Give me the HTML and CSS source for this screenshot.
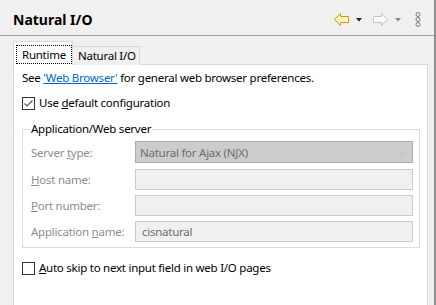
FILE: index.html
```html
<!DOCTYPE html>
<html>
<head>
<meta charset="utf-8">
<link rel="stylesheet" href="styles.css">
</head>
<body>
<div class="window">
  <div class="header">
    <div class="title">Natural I/O</div>
    <div class="toolbar">
      <svg class="ico-arrow" width="15" height="13" viewBox="0 0 15 13"><path d="M0.5 6.5 L6.5 0.5 L6.5 3.5 L14.5 3.5 L14.5 9.5 L6.5 9.5 L6.5 12.5 Z" fill="#fff3c4" stroke="#d8960f" stroke-linejoin="miter"/></svg>
      <svg class="ico-drop" width="6" height="4" viewBox="0 0 6 4"><path d="M0 0 H6 L3 3.5 Z" fill="#222"/></svg>
      <svg class="ico-arrow fwd" width="15" height="13" viewBox="0 0 15 13"><path d="M14.5 6.5 L8.5 0.5 L8.5 3.5 L0.5 3.5 L0.5 9.5 L8.5 9.5 L8.5 12.5 Z" fill="#fafafa" stroke="#c4c4c4"/></svg>
      <svg class="ico-drop" width="6" height="4" viewBox="0 0 6 4"><path d="M0 0 H6 L3 3.5 Z" fill="#8a8a8a"/></svg>
      <svg class="ico-menu" width="6" height="15" viewBox="0 0 6 15"><circle cx="3" cy="2.5" r="2" fill="none" stroke="#777"/><circle cx="3" cy="7.5" r="2" fill="none" stroke="#777"/><circle cx="3" cy="12.5" r="2" fill="none" stroke="#777"/></svg>
    </div>
  </div>
  <div class="body">
    <div class="tabs">
      <div class="tab active"><span class="focus">Runtime</span></div>
      <div class="tab">Natural I/O</div>
    </div>
    <div class="panel">
      <div class="line">See <a class="link" href="#">'Web Browser'</a> for general web browser preferences.</div>
      <div class="check-row first">
        <svg class="cb" width="13" height="13" viewBox="0 0 13 13"><rect x="0.5" y="0.5" width="12" height="12" fill="#fff" stroke="#333"/><path d="M2.5 6.5 L5 9 L10.5 3.5" fill="none" stroke="#555" stroke-width="1.2"/></svg>
        <span>Use <u>d</u>efault configuration</span>
      </div>
      <fieldset class="group">
        <legend>Application/Web server</legend>
        <div class="row combo-row">
          <span class="lbl">Server <u>t</u>ype:</span>
          <div class="combo"><span>Natural for Ajax (NJX)</span>
            <svg width="9" height="5" viewBox="0 0 9 5"><path d="M0.5 0.5 L4.5 4.5 L8.5 0.5" fill="none" stroke="#bdbdbd"/></svg>
          </div>
        </div>
        <div class="row">
          <span class="lbl"><u>H</u>ost name:</span>
          <div class="field"></div>
        </div>
        <div class="row">
          <span class="lbl"><u>P</u>ort number:</span>
          <div class="field"></div>
        </div>
        <div class="row">
          <span class="lbl">Application <u>n</u>ame:</span>
          <div class="field">cisnatural</div>
        </div>
      </fieldset>
      <div class="check-row last">
        <svg class="cb" width="13" height="13" viewBox="0 0 13 13"><rect x="0.5" y="0.5" width="12" height="12" fill="#fff" stroke="#333"/></svg>
        <span><u>A</u>uto skip to next input field in web I/O pages</span>
      </div>
    </div>
  </div>
</div>
</body>
</html>
```

FILE: styles.css
```css
* { box-sizing: border-box; }
html, body { margin: 0; padding: 0; }
body {
  width: 436px;
  height: 305px;
  overflow: hidden;
  background: #f0f0f0;
  font-family: "Noto Sans", "Open Sans", sans-serif;
  font-size: 11.5px;
  letter-spacing: -0.25px;
  color: #000;
}
.window {
  display: flex;
  flex-direction: column;
  height: 305px;
  border-right: 2px solid #8e8e8e;
}
.header {
  height: 36px;
  flex: none;
  display: flex;
  align-items: center;
  padding-left: 13px;
  padding-top: 4px;
  border-bottom: 1px solid #a0a0a0;
}
.title {
  font-weight: bold;
  font-size: 14px;
  letter-spacing: 0;
  flex: 1;
}
.toolbar {
  display: flex;
  align-items: center;
  padding-right: 13px;
}
.toolbar svg { display: block; }
.ico-drop { margin-left: 7px; margin-right: 11px; }
.ico-menu { margin-left: 3px; }
.body {
  flex: 1;
  display: flex;
  flex-direction: column;
  padding: 5px 6px 0 13px;
  min-height: 0;
}
.tabs {
  display: flex;
  align-items: flex-end;
  height: 24px;
  flex: none;
  position: relative;
  z-index: 1;
  margin-bottom: -1px;
}
.tab {
  height: 19px;
  border: 1px solid #d9d9d9;
  border-bottom: none;
  background: #f0f0f0;
  padding: 0 3px 0 5px;
  line-height: 18px;
  margin-left: -1px;
}
.tab.active {
  height: 24px;
  background: #fff;
  margin-left: 0;
  padding: 3px 0 0 2px;
  line-height: 17px;
  z-index: 2;
  position: relative;
}
.focus {
  display: inline-block;
  border: 1px dotted #000;
  padding: 0 5px;
  line-height: 17px;
}
.panel {
  flex: 1;
  background: #fff;
  border: 1px solid #d9d9d9;
  border-bottom: none;
  padding: 5px 7px 0 8px;
}
.line { line-height: 16px; height: 16px; }
.link { color: #0066cc; text-decoration: underline; }
.check-row {
  display: flex;
  align-items: center;
  line-height: 16px;
  height: 16px;
}
.check-row .cb { flex: none; margin-right: 4px; }
.check-row.first { margin-top: 9px; }
.check-row.last { margin-top: 12px; }
.group {
  margin: 10px 0 0 0;
  padding: 0 6px 5px 8px;
  border: 1px solid #dcdcdc;
  min-width: 0;
}
.group legend {
  padding: 0 1px;
  margin-left: -1px;
  line-height: 16px;
}
.row {
  display: flex;
  align-items: center;
  margin-top: 5px;
}
.row.combo-row { margin-top: 4px; }
.lbl {
  width: 104px;
  flex: none;
  color: #8d8d8d;
  white-space: nowrap;
}
.combo {
  flex: 1;
  height: 22px;
  background: #cccccc;
  border: 1px solid #adadad;
  color: #6d6d6d;
  display: flex;
  align-items: center;
  justify-content: space-between;
  padding: 0 6px 0 4px;
  margin-bottom: 1px;
}
.combo svg { display: block; }
.field {
  flex: 1;
  height: 21px;
  background: #f0f0f0;
  border: 1px solid #cccccc;
  color: #6d6d6d;
  line-height: 19px;
  padding-left: 6px;
}
```
